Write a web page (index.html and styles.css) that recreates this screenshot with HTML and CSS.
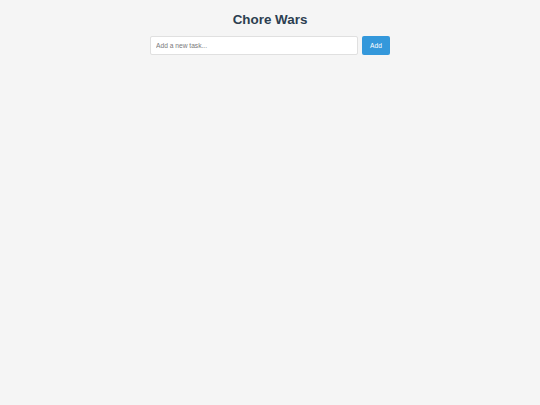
FILE: index.html
```html
<!DOCTYPE html>
<html lang="en">
<head>
<meta charset="utf-8">
<title>Chore Wars</title>
<link rel="stylesheet" href="styles.css">
</head>
<body>
<main class="app">
  <h1 class="title">Chore Wars</h1>
  <form class="task-form">
    <input class="task-input" type="text" placeholder="Add a new task...">
    <button class="add-btn" type="button">Add</button>
  </form>
</main>
</body>
</html>
```
FILE: styles.css
```css
html, body {
  margin: 0;
  padding: 0;
  background: #f5f5f5;
  font-family: "Liberation Sans", Arial, sans-serif;
}
body {
  min-height: 405px;
}
.app {
  width: 240px;
  margin: 0 auto;
  padding-top: 13.3px;
  display: flex;
  flex-direction: column;
}
.title {
  margin: 0 0 7.9px;
  font-size: 13.4px;
  line-height: 14.8px;
  font-weight: bold;
  color: #2c3e50;
  text-align: center;
}
.task-form {
  display: flex;
  gap: 4.5px;
  margin: 0;
}
.task-input {
  flex: 1;
  min-width: 0;
  box-sizing: border-box;
  height: 19.3px;
  margin: 0;
  padding: 0 5px;
  border: 0.5px solid #e0e0e0;
  border-radius: 2px;
  background: #ffffff;
  font-family: "Liberation Sans", Arial, sans-serif;
  font-size: 6.67px;
  color: #333;
  outline: none;
}
.task-input::placeholder {
  color: #7a7a7a;
}
.add-btn {
  box-sizing: border-box;
  width: 28px;
  height: 19.5px;
  margin: 0;
  padding: 0;
  border: none;
  border-radius: 2px;
  background: #3498db;
  color: #ffffff;
  font-family: "Liberation Sans", Arial, sans-serif;
  font-size: 6.67px;
  cursor: pointer;
}
```
